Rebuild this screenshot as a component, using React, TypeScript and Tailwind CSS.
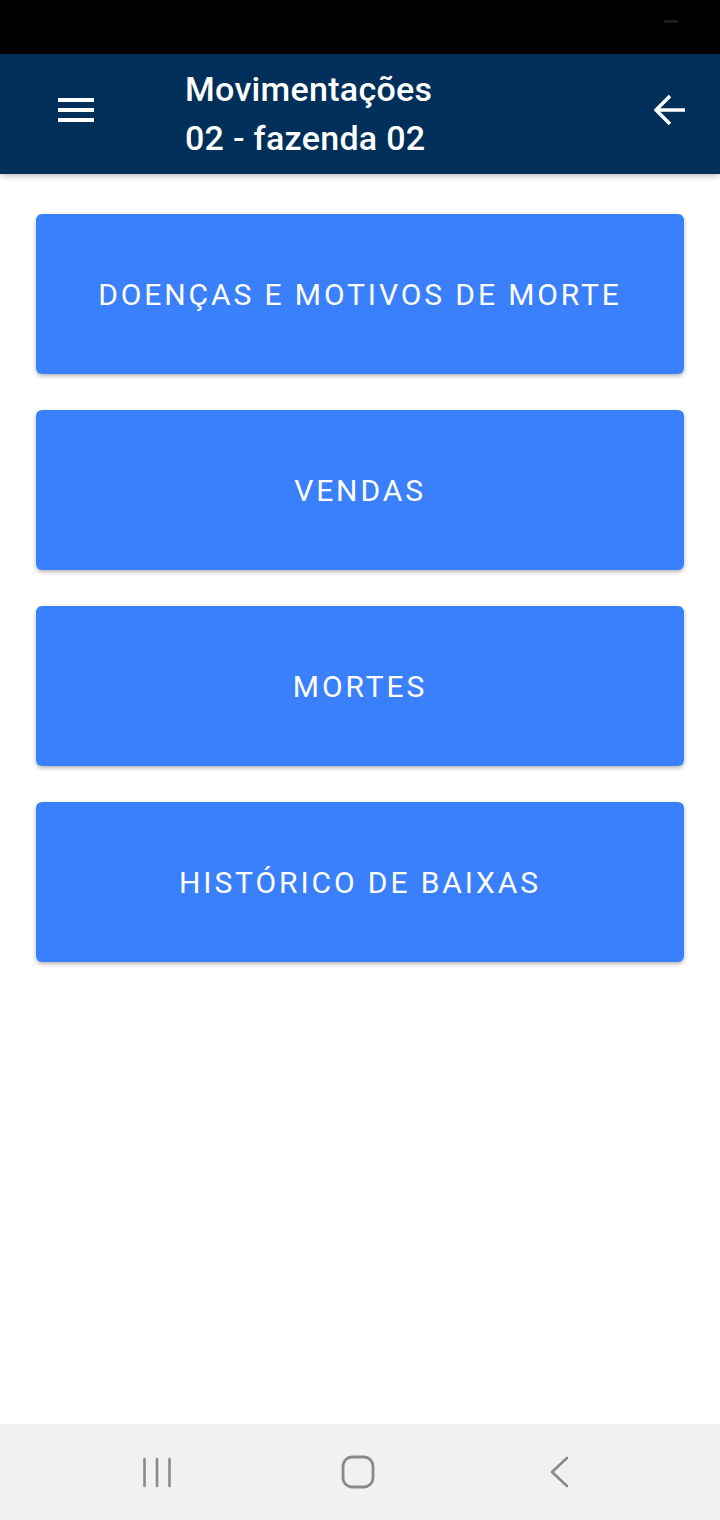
import React from "react";

const items = ["DOENÇAS E MOTIVOS DE MORTE", "VENDAS", "MORTES", "HISTÓRICO DE BAIXAS"];

export default function App() {
  return (
    <div className="w-[720px] h-[1520px] flex flex-col bg-white overflow-hidden" style={{ fontFamily: "Roboto, 'Noto Sans', sans-serif" }}>
      <div className="h-[54px] bg-black relative shrink-0">
        <div className="absolute left-[664px] top-[20px] w-[14px] h-[3px] bg-[#1c1c1c]" />
      </div>
      <div className="h-[120px] bg-[#00305a] flex items-center shrink-0 relative z-10 shadow-[0_2px_6px_rgba(0,0,0,0.25)]">
        <div className="w-[185px] pl-[58px] flex -mt-[8px]">
          <div className="flex flex-col gap-[6px]">
            <div className="w-[36px] h-[4px] bg-white" />
            <div className="w-[36px] h-[4px] bg-white" />
            <div className="w-[36px] h-[4px] bg-white" />
          </div>
        </div>
        <div className="flex-1 flex flex-col text-white font-medium text-[34px] leading-[49px] tracking-[0.3px]">
          <span>Movimentações</span>
          <span>02 - fazenda 02</span>
        </div>
        <div className="pr-[34px] -mt-[8px]">
          <svg width="32" height="32" viewBox="0 0 32 32" fill="none" stroke="white" strokeWidth="3.5" strokeLinecap="butt">
            <line x1="2" y1="16" x2="31" y2="16" />
            <polyline points="16,2 2,16 16,30" strokeLinejoin="miter" />
          </svg>
        </div>
      </div>
      <div className="flex-1 flex flex-col gap-[36px] px-[36px] pt-[40px]">
        {items.map((t) => (
          <div key={t} className="h-[160px] rounded-[6px] bg-[#3a80fd] shadow-[0_2px_4px_rgba(0,0,0,0.3)] flex items-center justify-center text-white text-[30px] tracking-[2.9px]">
            {t}
          </div>
        ))}
      </div>
      <div className="h-[96px] bg-[#f1f1f1] flex items-center justify-center shrink-0">
        <div className="flex items-center">
          <div className="w-[200px] flex justify-center pr-[6px]">
            <svg width="30" height="32" viewBox="0 0 30 32" stroke="#8a8a8a" strokeWidth="2.6" strokeLinecap="round">
              <line x1="2.5" y1="3" x2="2.5" y2="30" />
              <line x1="15" y1="3" x2="15" y2="30" />
              <line x1="27.5" y1="3" x2="27.5" y2="30" />
            </svg>
          </div>
          <div className="w-[200px] flex justify-center pr-[4px]">
            <svg width="34" height="34" viewBox="0 0 34 34" fill="none" stroke="#8a8a8a" strokeWidth="2.8">
              <rect x="2" y="2" width="30" height="30" rx="9" />
            </svg>
          </div>
          <div className="w-[200px] flex justify-center pr-[2px]">
            <svg width="24" height="32" viewBox="0 0 24 32" fill="none" stroke="#8a8a8a" strokeWidth="2.6" strokeLinecap="round" strokeLinejoin="round">
              <polyline points="20,2 5,16 20,30" />
            </svg>
          </div>
        </div>
      </div>
    </div>
  );
}
